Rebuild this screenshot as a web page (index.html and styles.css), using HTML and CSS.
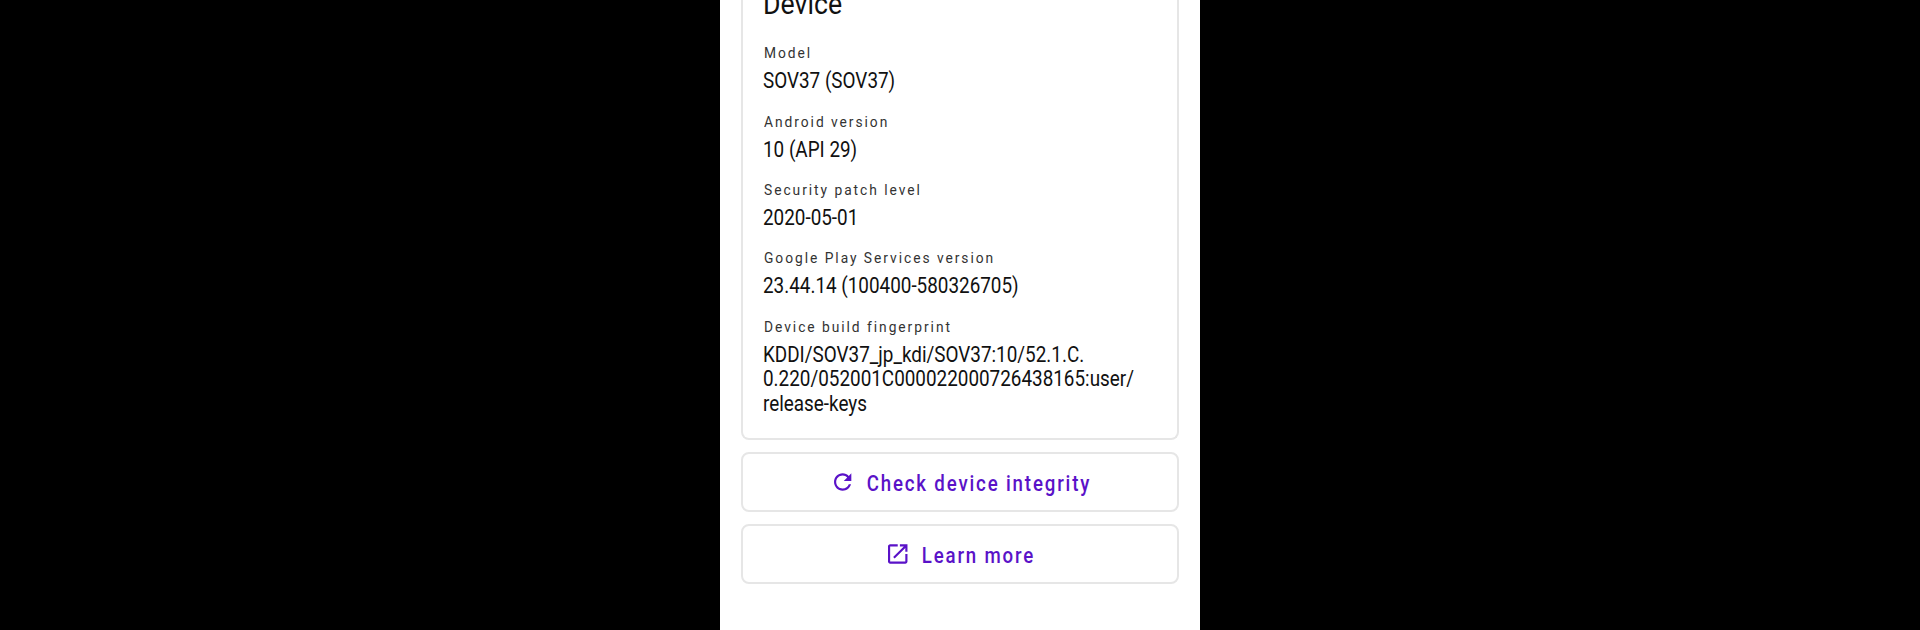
FILE: index.html
```html
<!DOCTYPE html>
<html lang="en">
<head>
    <meta charset="UTF-8">
    <title>Device integrity</title>
    <link rel="stylesheet" href="styles.css">
</head>
<body>
    <main class="screen">
        <!-- Device card -->
        <section class="card">
            <h2 class="card-title">Device</h2>
            <div class="row">
                <div class="label">Model</div>
                <div class="value">SOV37 (SOV37)</div>
            </div>
            <div class="row">
                <div class="label">Android version</div>
                <div class="value">10 (API 29)</div>
            </div>
            <div class="row">
                <div class="label">Security patch level</div>
                <div class="value">2020-05-01</div>
            </div>
            <div class="row">
                <div class="label">Google Play Services version</div>
                <div class="value">23.44.14 (100400-580326705)</div>
            </div>
            <div class="row">
                <div class="label">Device build fingerprint</div>
                <div class="value">KDDI/SOV37_jp_kdi/SOV37:10/52.1.C.<br>0.220/052001C000022000726438165:user/<br>release-keys</div>
            </div>
        </section>

        <!-- Actions -->
        <a href="#" class="btn">
            <span class="btn-inner">
                <svg class="btn-icon" viewBox="0 0 24 24" preserveAspectRatio="none"><path d="M17.65 6.35C16.2 4.9 14.21 4 12 4c-4.42 0-7.99 3.58-7.99 8s3.57 8 7.99 8c3.73 0 6.84-2.55 7.73-6h-2.08c-.82 2.33-3.04 4-5.65 4-3.31 0-6-2.69-6-6s2.69-6 6-6c1.66 0 3.14.69 4.22 1.78L13 11h7V4l-2.35 2.35z"/></svg>
                <span class="btn-text">Check device integrity</span>
            </span>
        </a>
        <a href="#" class="btn">
            <span class="btn-inner">
                <svg class="btn-icon" viewBox="0 0 24 24" preserveAspectRatio="none"><path d="M19 19H5V5h7V3H5c-1.11 0-2 .9-2 2v14c0 1.1.89 2 2 2h14c1.1 0 2-.9 2-2v-7h-2v7zM14 3v2h3.59l-9.83 9.83 1.41 1.41L19 6.41V10h2V3h-7z"/></svg>
                <span class="btn-text">Learn more</span>
            </span>
        </a>
    </main>
</body>
</html>
```

FILE: styles.css
```css
body {
    margin: 0;
    height: 630px;
    overflow: hidden;
    background-color: #000;
    font-family: Roboto, sans-serif;
}
.screen {
    width: 480px;
    height: 630px;
    margin: 0 auto;
    padding: 0 21px 46px;
    box-sizing: border-box;
    overflow: hidden;
    display: flex;
    flex-direction: column;
    justify-content: flex-end;
    gap: 12px;
    background-color: #fff;
}
.card {
    flex-shrink: 0;
    padding: 0 20px 22px;
    border: 2px solid #e6e6e6;
    border-top: 0;
    border-radius: 8px;
}
.card-title {
    margin: 0 0 21px;
    font-size: 29.33px;
    line-height: 36px;
    font-weight: 400;
    color: #111;
    transform: scaleX(0.91);
    transform-origin: left;
}
.row {
    margin-top: 18px;
}
.label {
    margin-left: 1px;
    font-size: 15.5px;
    line-height: 20px;
    letter-spacing: 2.2px;
    white-space: nowrap;
    color: #333;
    transform: scaleX(0.89);
    transform-origin: left;
}
.value {
    margin-top: 6px;
    font-size: 21.33px;
    line-height: 24.4px;
    white-space: nowrap;
    color: #111;
    transform: scaleX(0.885);
    transform-origin: left;
}
.btn {
    flex-shrink: 0;
    height: 60px;
    box-sizing: border-box;
    border: 2px solid #e6e6e6;
    border-radius: 8px;
    display: flex;
    align-items: center;
    justify-content: center;
    color: #5a12c8;
    text-decoration: none;
}
/* glyphs on the device render narrow, icon width makes up for the squeeze */
.btn-inner {
    display: flex;
    align-items: center;
    gap: 12.6px;
    white-space: nowrap;
    transform: scaleX(0.875);
}
.btn-text {
    padding-top: 2px;
    font-size: 21.33px;
    font-weight: 500;
    letter-spacing: 2.1px;
}
.btn-icon {
    width: 29.7px;
    height: 26px;
    fill: currentColor;
}
```
